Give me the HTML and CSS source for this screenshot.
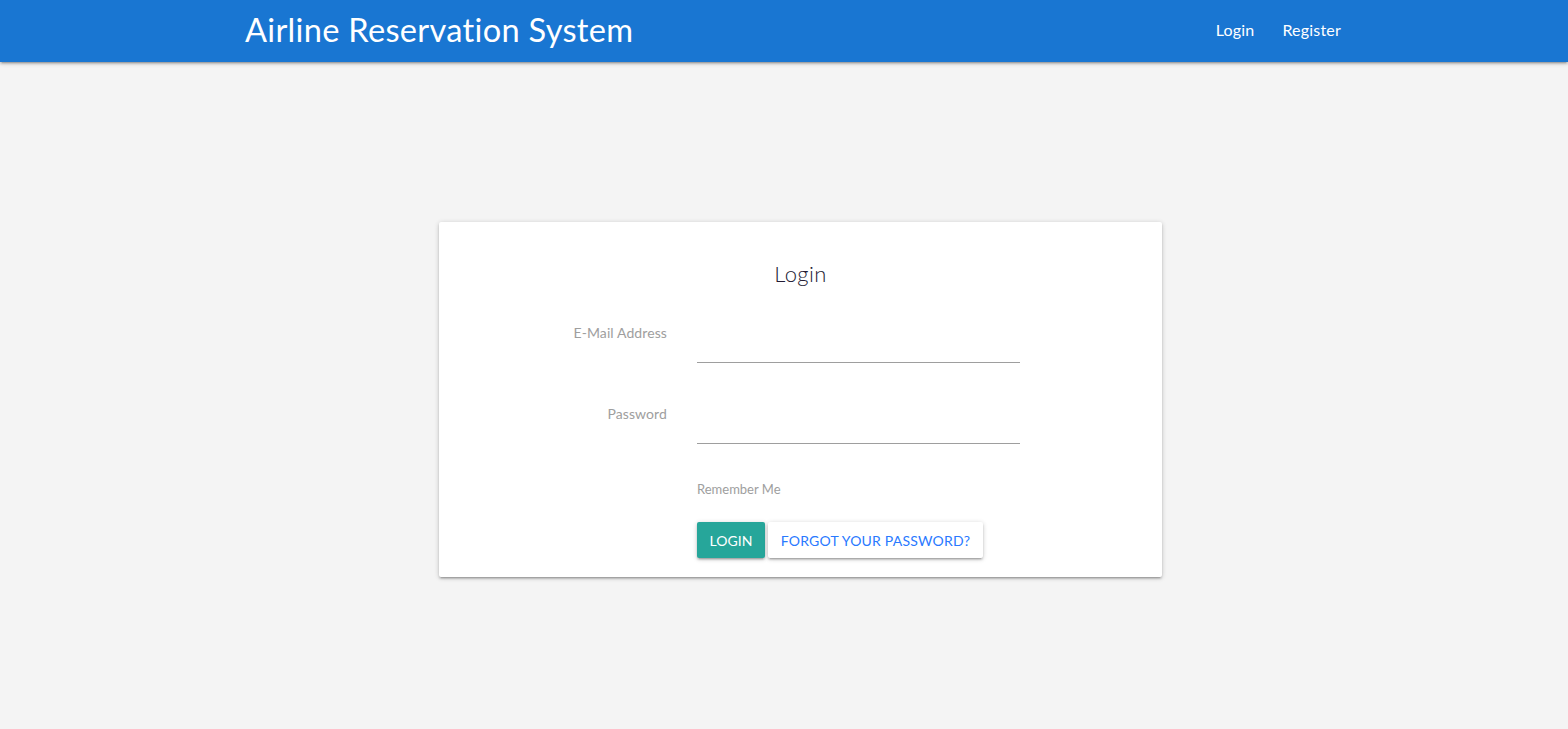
FILE: index.html
```html
<!DOCTYPE html>
<html>
<head>
<meta charset="utf-8">
<link rel="stylesheet" href="styles.css">
</head>
<body>
<nav class="nav">
  <div class="nav-inner">
    <a class="brand">Airline Reservation System</a>
    <ul class="links">
      <li><a>Login</a></li>
      <li><a>Register</a></li>
    </ul>
  </div>
</nav>
<main class="main">
  <div class="card">
    <h4 class="title">Login</h4>
    <div class="form">
      <div class="row">
        <label class="label">E-Mail Address</label>
        <div class="field"><div class="input"></div></div>
      </div>
      <div class="row">
        <label class="label">Password</label>
        <div class="field"><div class="input"></div></div>
      </div>
      <div class="row row-remember">
        <div class="label"></div>
        <div class="field"><span class="remember">Remember Me</span></div>
      </div>
      <div class="row row-buttons">
        <div class="label"></div>
        <div class="field buttons">
          <button class="btn btn-login">LOGIN</button>
          <button class="btn btn-flat">FORGOT YOUR PASSWORD?</button>
        </div>
      </div>
    </div>
  </div>
</main>
</body>
</html>
```
FILE: styles.css
```css
* { box-sizing: border-box; }
html, body { margin: 0; padding: 0; }
body {
  background: #f4f4f4;
  font-family: Lato, "Open Sans", sans-serif;
  height: 729px;
  overflow: hidden;
}
.nav {
  height: 62px;
  background: #1976d2;
  box-shadow: 0 2px 2px 0 rgba(0,0,0,0.14), 0 3px 1px -2px rgba(0,0,0,0.12), 0 1px 5px 0 rgba(0,0,0,0.2);
  position: relative;
  z-index: 1;
}
.nav-inner {
  display: flex;
  align-items: center;
  justify-content: space-between;
  height: 62px;
  padding-left: 245px;
  padding-right: 213px;
  padding-bottom: 3px;
}
.brand {
  color: #fff;
  font-size: 32.6px;
  font-weight: 400;
  letter-spacing: 0.3px;
}
.links {
  display: flex;
  list-style: none;
  margin: 0;
  padding: 0;
}
.links a {
  display: block;
  color: #fff;
  font-size: 16px;
  padding: 0 14px;
  line-height: 40px;
  letter-spacing: 0.2px;
}
.main {
  padding-top: 160px;
  padding-left: 439px;
}
.card {
  width: 723px;
  height: 355px;
  background: #fff;
  border-radius: 2px;
  box-shadow: 0 2px 2px 0 rgba(0,0,0,0.14), 0 3px 1px -2px rgba(0,0,0,0.12), 0 1px 5px 0 rgba(0,0,0,0.2);
  padding-top: 40px;
}
.title {
  margin: 0;
  text-align: center;
  font-size: 22px;
  font-weight: 300;
  color: #231a33;
  line-height: 24px;
  letter-spacing: 0.4px;
}
.form {
  margin-top: 37px;
}
.row {
  display: flex;
  height: 66px;
  margin-bottom: 15px;
}
.label {
  width: 228px;
  text-align: right;
  font-size: 14px;
  color: #9e9e9e;
  line-height: 20px;
  letter-spacing: 0.1px;
}
.field {
  margin-left: 30px;
  width: 323px;
}
.input {
  height: 31px;
  margin-top: 9px;
  border-bottom: 1px solid #9e9e9e;
}
.row-remember {
  height: auto;
  margin-top: -7px;
  margin-bottom: 0;
}
.remember {
  font-size: 13px;
  color: #9e9e9e;
  line-height: 18px;
}
.row-buttons {
  margin-top: 24px;
  height: 36px;
}
.buttons {
  display: flex;
  gap: 3px;
  width: auto;
}
.btn {
  height: 36px;
  border: none;
  border-radius: 2px;
  font-family: inherit;
  font-size: 14px;
  padding: 0 10px;
  cursor: pointer;
  box-shadow: 0 2px 2px 0 rgba(0,0,0,0.14), 0 3px 1px -2px rgba(0,0,0,0.12), 0 1px 5px 0 rgba(0,0,0,0.2);
}
.btn-login {
  background: #26a69a;
  color: #fff;
  width: 68px;
}
.btn-flat {
  background: #fff;
  color: #2979ff;
  width: 215px;
  letter-spacing: 0.2px;
}
```
